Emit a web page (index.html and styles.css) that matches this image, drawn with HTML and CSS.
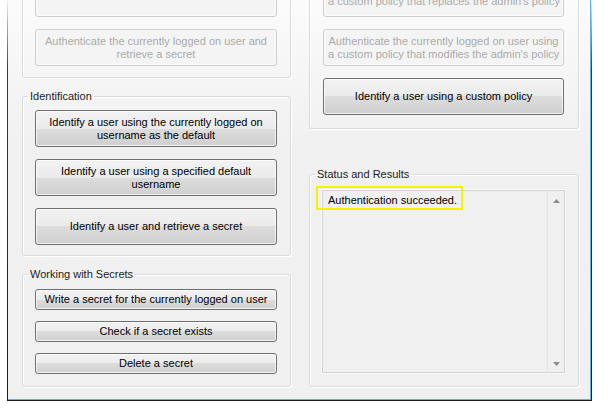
FILE: index.html
```html
<!DOCTYPE html>
<html>
<head>
<meta charset="utf-8">
<link rel="stylesheet" href="styles.css">
</head>
<body>
<div class="window">
  <div class="content">
    <div class="column column-left">
      <fieldset class="group group-cut">
        <div class="group-body">
          <button class="btn btn-tall" disabled>Authenticate the currently logged on user</button>
          <button class="btn" disabled>Authenticate the currently logged on user and<br>retrieve a secret</button>
        </div>
      </fieldset>
      <fieldset class="group">
        <legend>Identification</legend>
        <div class="group-body">
          <button class="btn">Identify a user using the currently logged on<br>username as the default</button>
          <button class="btn">Identify a user using a specified default<br>username</button>
          <button class="btn">Identify a user and retrieve a secret</button>
        </div>
      </fieldset>
      <fieldset class="group">
        <legend>Working with Secrets</legend>
        <div class="group-body group-body-short">
          <button class="btn btn-short">Write a secret for the currently logged on user</button>
          <button class="btn btn-short">Check if a secret exists</button>
          <button class="btn btn-short">Delete a secret</button>
        </div>
      </fieldset>
    </div>
    <div class="column column-right">
      <fieldset class="group">
        <div class="group-body group-body-right">
          <button class="btn btn-tall" disabled>Authenticate the currently logged on user using<br>a custom policy that replaces the admin's policy</button>
          <button class="btn" disabled>Authenticate the currently logged on user using<br>a custom policy that modifies the admin's policy</button>
          <button class="btn">Identify a user using a custom policy</button>
        </div>
      </fieldset>
      <fieldset class="group">
        <legend>Status and Results</legend>
        <div class="group-body group-body-status">
          <div class="textbox">
            <div class="textbox-text">Authentication succeeded.</div>
            <div class="scrollbar">
              <div class="scroll-arrow scroll-up">
                <svg width="7" height="4" viewBox="0 0 7 4"><polygon points="0,4 3.5,0 7,4" fill="#8c8c8c"/></svg>
              </div>
              <div class="scroll-arrow scroll-down">
                <svg width="7" height="4" viewBox="0 0 7 4"><polygon points="0,0 7,0 3.5,4" fill="#8c8c8c"/></svg>
              </div>
            </div>
            <div class="highlight"></div>
          </div>
        </div>
      </fieldset>
    </div>
  </div>
</div>
</body>
</html>
```
FILE: styles.css
```css
html, body {
  margin: 0;
  padding: 0;
  background: #ffffff;
  font-family: "Liberation Sans", Arial, sans-serif;
  font-size: 11px;
}

.window {
  box-sizing: border-box;
  width: 585px;
  height: 401px;
  margin-left: 7px;
  border-style: solid;
  border-width: 0 1px 1px 1px;
  border-image: linear-gradient(to bottom, #f2f2f2 0px, #3a3a3a 70px, #1c1c1c 100%) 1;
  background: linear-gradient(to bottom, #fbfbfb 0px, #f0f0f0 150px);
  box-shadow: inset -1px -1px 0 #5cb2de;
  overflow: hidden;
}

.content {
  display: grid;
  grid-template-columns: 269px 270px;
  column-gap: 18px;
  padding-left: 14px;
  margin-top: -36px;
}

.column {
  display: flex;
  flex-direction: column;
}

.column-left {
  gap: 12px;
}

.column-right {
  justify-content: space-between;
}

.group {
  margin: 0;
  padding: 0;
  min-width: 0;
  border: 1px solid #d5dbdf;
  border-radius: 3px;
  box-shadow: inset 1px 1px 0 #ffffff, 1px 1px 0 #ffffff;
}

.group legend {
  margin-left: 5px;
  padding: 0 2px;
  font: 11px/13px "Liberation Sans", Arial, sans-serif;
  color: #1a1a1a;
}

.group-body {
  display: flex;
  flex-direction: column;
  gap: 12px;
  padding: 7px 13px 10px 12px;
}

.group-cut .group-body {
  padding-bottom: 11px;
}

.group-body-short {
  gap: 11px;
  padding: 8px 13px 12px 12px;
}

.group-body-right {
  padding: 7px 14px 13px 13px;
}

.group-body-status {
  padding: 9px 13px 13px 12px;
}

.btn {
  box-sizing: border-box;
  height: 37px;
  margin: 0;
  padding: 0 4px;
  border: 1px solid #707070;
  border-radius: 3px;
  font: 11px/13px "Liberation Sans", Arial, sans-serif;
  color: #000000;
  text-align: center;
  white-space: nowrap;
  background: linear-gradient(to bottom, #f2f2f2 0%, #ebebeb 50%, #dddddd 50%, #cfcfcf 100%);
  box-shadow: inset 0 0 0 1px rgba(255, 255, 255, 0.7);
}

.btn:disabled {
  border-color: #cdcdcd;
  background: #f4f4f4;
  color: #ababab;
  box-shadow: inset 0 0 0 1px #fbfbfb;
}

.btn-tall {
  height: 45px;
}

.btn-short {
  height: 21px;
}

.textbox {
  position: relative;
  box-sizing: border-box;
  display: flex;
  height: 183px;
  border: 1px solid #d2d2d2;
  background: #f0f0f0;
  box-shadow: 0 0 0 1px #fafafa;
}

.textbox-text {
  flex: 1;
  padding: 3px 5px;
  font: 11px/13px "Liberation Sans", Arial, sans-serif;
  color: #000000;
}

.scrollbar {
  width: 16px;
  border-left: 1px solid #e4e4e4;
  display: flex;
  flex-direction: column;
  justify-content: space-between;
  background: #f0f0f0;
}

.scroll-arrow {
  display: flex;
  justify-content: center;
  align-items: center;
}

.scroll-up {
  height: 20px;
}

.scroll-down {
  height: 16px;
}

.scroll-arrow svg {
  display: block;
}

.highlight {
  position: absolute;
  left: -7px;
  top: -5px;
  box-sizing: border-box;
  width: 147px;
  height: 24px;
  border: 2px solid #f4f400;
}
```
